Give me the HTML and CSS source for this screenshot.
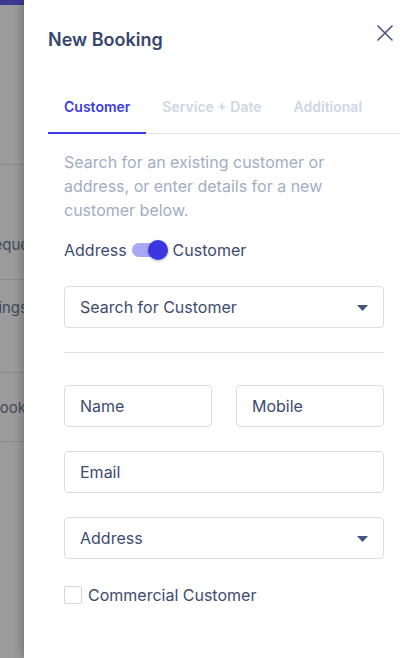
FILE: index.html
```html
<!DOCTYPE html>
<html lang="en">
<head>
<meta charset="utf-8">
<title>New Booking</title>
<link rel="stylesheet" href="styles.css">
</head>
<body>
<div class="screen">
  <div class="backdrop">
    <div class="bd-topbar"></div>
    <div class="bd-row bd-row1"></div>
    <div class="bd-row bd-row2"><span class="bd-text">Reque</span></div>
    <div class="bd-row bd-row3"><span class="bd-text">Bookings</span></div>
    <div class="bd-row bd-row4"><span class="bd-text">Book</span></div>
  </div>
  <div class="panel">
    <div class="header">
      <h1 class="title">New Booking</h1>
      <svg class="close" width="16" height="16" viewBox="0 0 16 16"><path d="M1 1 L15 15 M15 1 L1 15" stroke="#45557e" stroke-width="1.6" stroke-linecap="round" fill="none"/></svg>
    </div>
    <div class="tabs">
      <div class="tab active">Customer</div>
      <div class="tab">Service + Date</div>
      <div class="tab">Additional</div>
    </div>
    <div class="content">
      <p class="desc">Search for an existing customer or address, or enter details for a new customer below.</p>
      <div class="toggle-row">
        <span>Address</span>
        <span class="toggle"><span class="track"></span><span class="knob"></span></span>
        <span>Customer</span>
      </div>
      <div class="field select">
        <span>Search for Customer</span>
        <svg class="caret" width="11" height="6" viewBox="0 0 11 6"><path d="M0 0 H11 L5.5 6 Z" fill="#45557e"/></svg>
      </div>
      <div class="divider"></div>
      <div class="pair">
        <div class="field"><span>Name</span></div>
        <div class="field"><span>Mobile</span></div>
      </div>
      <div class="field gap"><span>Email</span></div>
      <div class="field select gap">
        <span>Address</span>
        <svg class="caret" width="11" height="6" viewBox="0 0 11 6"><path d="M0 0 H11 L5.5 6 Z" fill="#45557e"/></svg>
      </div>
      <div class="check-row">
        <span class="checkbox"></span>
        <span>Commercial Customer</span>
      </div>
    </div>
  </div>
</div>
</body>
</html>
```

FILE: styles.css
```css
* { box-sizing: border-box; }
html, body { margin: 0; padding: 0; }
body {
  font-family: Inter, "Noto Sans", sans-serif;
  background: #ffffff;
  color: #3d4b6f;
}
.screen {
  display: flex;
  width: 419px;
  height: 658px;
  overflow: hidden;
}
.backdrop {
  width: 24px;
  flex: none;
  background: #9b9b9b;
  overflow: hidden;
}
.bd-topbar { height: 5px; background: #3d3993; }
.bd-row {
  display: flex;
  justify-content: flex-end;
  overflow: hidden;
  white-space: nowrap;
  border-bottom: 1px solid #8c8c8c;
  font-size: 15px;
  color: #414a5e;
}
.bd-row1 { height: 160px; }
.bd-row2 { height: 115px; align-items: flex-end; padding-bottom: 25px; }
.bd-row3 { height: 93px; align-items: flex-start; padding-top: 18px; }
.bd-row4 { height: 69px; align-items: center; }
.bd-text { margin-right: -5px; }
.bd-row3 .bd-text { margin-right: -4px; }
.bd-row4 .bd-text { margin-right: -2px; }

.panel {
  flex: 1;
  background: #ffffff;
  box-shadow: -3px 0 8px rgba(0, 0, 0, 0.22);
  padding: 26px 19px 0 24px;
  position: relative;
}
.header {
  display: flex;
  justify-content: space-between;
  align-items: flex-start;
}
.title {
  margin: 0;
  font-size: 18px;
  line-height: 28px;
  font-weight: 600;
  color: #37466b;
}
.close { margin-top: -1px; margin-right: 7px; }

.tabs {
  display: flex;
  margin-top: 27px;
  border-bottom: 1px solid #e3e3e6;
}
.tab {
  padding: 16px 16px 15px;
  font-size: 14px;
  line-height: 20px;
  font-weight: 600;
  color: #d0d6e2;
  border-bottom: 2px solid transparent;
  margin-bottom: -1px;
}
.tab.active {
  color: #3b3be3;
  border-bottom-color: #3b3be3;
}

.content { padding: 0 16px; }
.desc {
  margin: 16px 0 0;
  font-size: 16px;
  line-height: 24px;
  color: #a3adc2;
}
.toggle-row {
  display: flex;
  align-items: center;
  gap: 5px;
  margin-top: 16px;
  font-size: 16px;
  line-height: 24px;
}
.toggle {
  display: flex;
  align-items: center;
  width: 36px;
  height: 20px;
}
.track {
  width: 34px;
  height: 14px;
  border-radius: 7px;
  background: #a8a8f4;
  flex: none;
}
.knob {
  width: 20px;
  height: 20px;
  border-radius: 50%;
  background: #3a36e2;
  margin-left: -18px;
  flex: none;
  box-shadow: 0 1px 3px rgba(0, 0, 0, 0.3);
}
.field {
  height: 42px;
  border: 1px solid #dcdde0;
  border-radius: 4px;
  display: flex;
  align-items: center;
  justify-content: space-between;
  padding: 0 15px;
  font-size: 16px;
  color: #3d4b6f;
}
.select { margin-top: 24px; }
.caret { margin-top: 1px; }
.divider {
  height: 1px;
  background: #e1e1e4;
  margin-top: 24px;
}
.pair {
  display: grid;
  grid-template-columns: 1fr 1fr;
  gap: 24px;
  margin-top: 32px;
}
.gap { margin-top: 24px; }
.check-row {
  display: flex;
  align-items: center;
  gap: 6px;
  margin-top: 24px;
  font-size: 16px;
  line-height: 24px;
}
.checkbox {
  width: 18px;
  height: 18px;
  border: 1px solid #d6d7db;
  border-radius: 2px;
  flex: none;
}
```
